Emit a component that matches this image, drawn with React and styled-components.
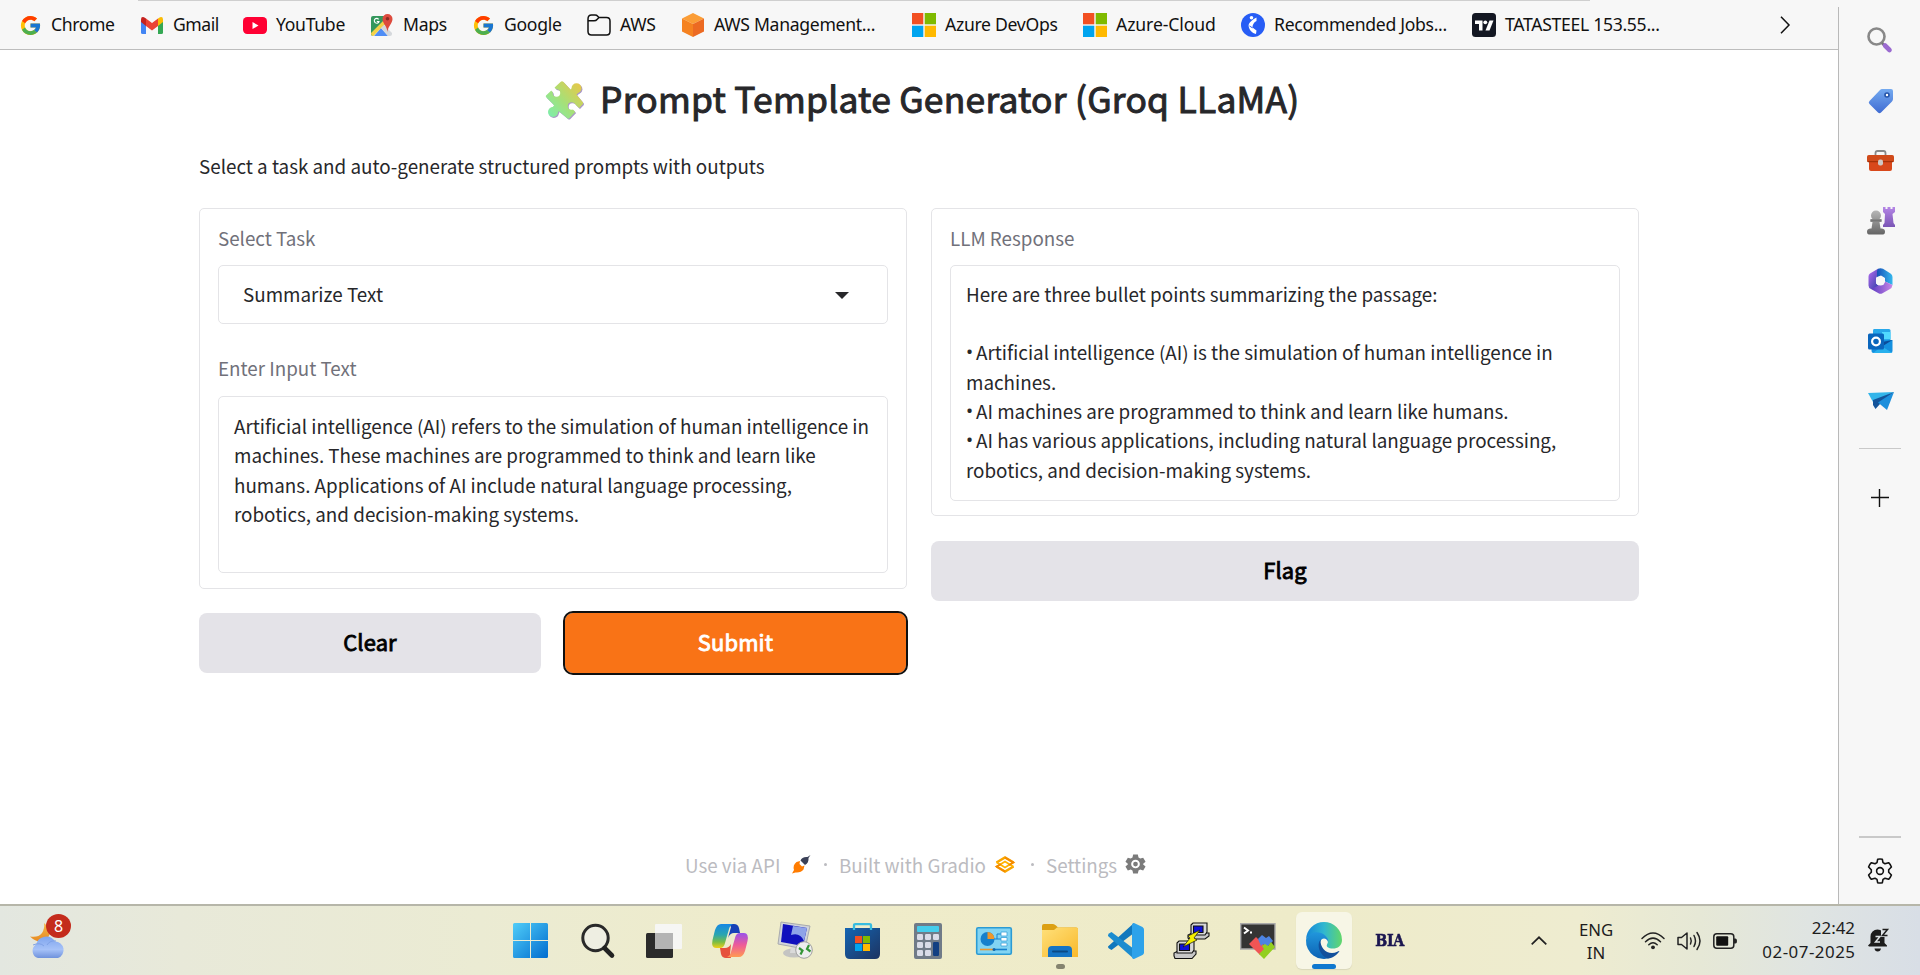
import React from "react";
import styled, { createGlobalStyle } from "styled-components";
import { FcGoogle } from "react-icons/fc";

const ui = `"Noto Sans", "Open Sans", sans-serif`;
const body = `"Noto Sans CJK SC", "Noto Sans", sans-serif`;

const GlobalStyle = createGlobalStyle`
  * { box-sizing: border-box; }
  body { margin: 0; background: #fff; overflow: hidden; }
  svg { display: block; flex: none; overflow: visible; }
  button { border: 0; padding: 0; margin: 0; }
`;

const Screen = styled.div`
  width: 1920px;
  height: 975px;
  display: flex;
  flex-direction: column;
  overflow: hidden;
`;

const Browser = styled.div`
  display: flex;
  height: 904px;
  background: #f7f7f7;
`;

const MainColumn = styled.div`
  width: 1838px;
  display: flex;
  flex-direction: column;
`;

const TopEdge = styled.div`
  height: 1px;
  width: 1452px;
  margin-left: 138px;
  background: #cfcfcf;
`;

const BookmarkBar = styled.nav`
  height: 49px;
  padding-left: 18px;
  display: flex;
  align-items: center;
  border-bottom: 1px solid #bdbdbd;
`;

const Bookmark = styled.a`
  width: ${(p) => p.$w}px;
  display: flex;
  align-items: center;
  gap: 9px;
  color: #111;
  font: 400 17.6px/24px ${ui};
  letter-spacing: ${(p) => p.$ls}px;
  white-space: nowrap;
`;

const BookmarkName = styled.span`
  padding-bottom: 2px;
`;

const IconBox = styled.span`
  width: 24px;
  height: 24px;
  display: flex;
  align-items: center;
  justify-content: center;
  flex: none;
`;

const Page = styled.main`
  flex: 1;
  display: flex;
  flex-direction: column;
  padding: 27px 199px 0;
  background: #fff;
  font-family: ${body};
`;

const Title = styled.h1`
  margin: 0;
  height: 46px;
  display: flex;
  align-items: center;
  gap: 16px;
  padding-left: 346px;
  color: #27272a;
  font-size: 35.4px;
  font-weight: 400;
  line-height: 46px;
  letter-spacing: 0.25px;
  -webkit-text-stroke: 1px #27272a;
  white-space: nowrap;
`;

const TitleText = styled.span`
  padding-bottom: 5px;
`;

const Intro = styled.p`
  margin: 28px 0 27px;
  color: #27272a;
  font-size: 18.82px;
  line-height: 30px;
`;

const Columns = styled.div`
  display: grid;
  grid-template-columns: 708px 708px;
  gap: 24px;
  align-items: start;
`;

const Column = styled.section`
  display: flex;
  flex-direction: column;
  gap: ${(p) => p.$gap}px;
`;

const Card = styled.div`
  height: ${(p) => p.$h}px;
  padding: 15px 18px 16px;
  border: 1px solid #e4e4e7;
  border-radius: 5px;
`;

const Label = styled.div`
  height: 28px;
  margin: ${(p) => p.$top || 0}px 0 ${(p) => p.$bottom || 13}px;
  color: #71717a;
  font-size: 18.8px;
  line-height: 28px;
`;

const Field = styled.div`
  height: ${(p) => p.$h}px;
  padding: ${(p) => p.$pt || 14}px 15px 0;
  border: 1px solid #e4e4e7;
  border-radius: 5px;
  color: #27272a;
  font-size: 18.82px;
  line-height: 29.4px;
  white-space: pre;
`;

const Line = styled.div`
  display: flex;
  height: 29.4px;
`;

const Bullet = styled.span`
  width: 10px;
  flex: none;
  font-family: ${ui};
`;

const Select = styled(Field)`
  padding: 0 38px 0 24px;
  display: flex;
  align-items: center;
  justify-content: space-between;
`;

const SelectValue = styled.span`
  padding-bottom: 1px;
`;

const Buttons = styled.div`
  display: grid;
  grid-template-columns: 342px 341px;
  gap: 24px;
`;

const Button = styled.button`
  height: 60px;
  padding-bottom: 2px;
  border-radius: 8px;
  background: ${(p) => (p.$primary ? "#f97316" : "#e4e3e8")};
  color: ${(p) => (p.$primary ? "#fff" : "#000")};
  outline: ${(p) => (p.$primary ? "2px solid #101010" : "none")};
  font-family: ${body};
  font-size: 21.9px;
  font-weight: 400;
  letter-spacing: 0.15px;
  line-height: 30px;
  -webkit-text-stroke: 0.85px currentColor;
`;

const Footer = styled.footer`
  margin: auto 0 25px;
  padding-left: 486px;
  height: 30px;
  display: flex;
  align-items: center;
  color: #bbbbc0;
  font-size: 18.8px;
`;

const FooterLink = styled.span`
  display: flex;
  align-items: center;
  gap: ${(p) => p.$gap || 9}px;
  width: ${(p) => p.$w}px;
  white-space: nowrap;
`;

const Dot = styled.span`
  width: 3px;
  height: 3px;
  border-radius: 50%;
  background: #bbbbc0;
  margin-right: 12px;
`;

const Sidebar = styled.aside`
  width: 82px;
  margin-top: 7px;
  padding: 4px 0 0;
  border-left: 1px solid #b9b9b9;
  display: flex;
  flex-direction: column;
  align-items: center;
`;

const SideItem = styled.div`
  height: 60px;
  width: 28px;
  margin-left: ${(p) => p.$ml ?? 2}px;
  display: flex;
  align-items: center;
  justify-content: center;
`;

const Rule = styled.div`
  width: 42px;
  height: ${(p) => p.$h}px;
  margin: ${(p) => p.$m};
  background: #c9c9c9;
`;

const Taskbar = styled.footer`
  height: 71px;
  border-top: 2px solid #b6b6a9;
  display: flex;
  align-items: center;
  background: linear-gradient(90deg, #e3e7e0 0, #e8e9d9 180px, #ebebd3 480px, #efecca 800px, #eeebc9 1300px, #eeecd0 1580px, #e6e8d6 1700px, #dfe4e2 1810px, #d8dee6 1920px);
  color: #1d1d1d;
  font-family: ${ui};
`;

const Weather = styled.div`
  width: 497px;
  height: 69px;
  padding: 17px 0 0 30px;
`;

const WeatherIcon = styled.div`
  position: relative;
  width: 36px;
  height: 36px;
`;

const Badge = styled.span`
  position: absolute;
  left: 16px;
  top: -9px;
  width: 25px;
  height: 24px;
  border-radius: 50%;
  background: #c42b1c;
  color: #fff;
  font: 400 16px/24px ${ui};
  text-align: center;
`;

const Apps = styled.div`
  display: flex;
  width: 1034px;
`;

const AppCell = styled.div`
  position: relative;
  flex: none;
  width: 66px;
  height: 57px;
  display: flex;
  align-items: center;
  justify-content: center;

  &:first-child {
    width: 68px;
    padding-right: 2px;
  }
`;

const Active = styled.div`
  width: 56px;
  height: 57px;
  border-radius: 6px;
  background: #f7f6e6;
  box-shadow: 0 1px 1px #d9d7bb;
  display: flex;
  align-items: center;
  justify-content: center;
`;

const Indicator = styled.i`
  position: absolute;
  bottom: 0;
  left: calc(50% - ${(p) => p.$w / 2}px);
  width: ${(p) => p.$w}px;
  height: 5px;
  border-radius: 3px;
  background: ${(p) => p.$c};
`;

const Bia = styled.span`
  color: #1b1650;
  font: 700 16.5px/20px "DejaVu Serif", serif;
  -webkit-text-stroke: 0.6px #1b1650;
  letter-spacing: -0.4px;
  transform: scaleX(0.86);
`;

const Tray = styled.div`
  flex: 1;
  display: flex;
  align-items: center;
`;

const Lang = styled.div`
  width: 34px;
  margin: 0 28px 0 32px;
  font-size: 16.8px;
  line-height: 23px;
  text-align: center;
`;

const Clock = styled.div`
  width: 100px;
  margin: 0 13px 0 18px;
  padding-bottom: 2px;
  display: flex;
  flex-direction: column;
  align-items: flex-end;
  font-size: 16.9px;
  line-height: 24px;
  white-space: nowrap;
`;

const DateText = styled.span`
  letter-spacing: 0.5px;
  margin-right: -0.5px;
`;

const TrayIcons = styled.div`
  display: flex;
  gap: 12px;
`;

const Gmail = () => (
  <svg width="22" height="17" viewBox="0 0 22 17">
    <path d="M0 2.2V15.5Q0 17 1.5 17H5V7Z" fill="#4285f4" />
    <path d="M22 2.2V15.5Q22 17 20.5 17H17V7Z" fill="#34a853" />
    <path d="M17 1.5 19 .3Q22-.6 22 2.5V5L17 9Z" fill="#fbbc04" />
    <path d="M5 1.5 3 .3Q0-.6 0 2.5V5L5 9Z" fill="#c5221f" />
    <path d="M5 1.5 11 6 17 1.5V9L11 13.4 5 9Z" fill="#ea4335" />
  </svg>
);

const YouTube = () => (
  <svg width="24" height="17" viewBox="0 0 24 17">
    <rect width="24" height="17" rx="4.2" fill="#ff0033" />
    <path d="M9.5 5v7l6-3.5Z" fill="#fff" />
  </svg>
);

const Maps = () => (
  <svg width="24" height="22" viewBox="0 0 24 22">
    <path d="M1 4Q1 2 3 2H16V9L2 22Q1 21 1 20Z" fill="#34975c" />
    <path d="M4 22 11 14 18 22Z" fill="#4f8df5" />
    <path d="M1 19 15 5 18 8 11 14 3.5 22Q1 22 1 19Z" fill="#f3d248" />
    <path d="M11 14 14 11 22 19V20Q22 22 20 22H18Z" fill="#d5d8dc" />
    <path d="M17.5 18C17 12 12.5 9.5 12.5 5A5 5 0 0 1 22.5 5C22.5 9.5 18 12 17.5 18Z" fill="#dd4b3e" />
    <circle cx="17.5" cy="4.8" r="1.8" fill="#8d2b23" />
    <path d="M8.6 5.3A2.4 2.4 0 1 0 9 7.5H6.8" fill="none" stroke="#fff" strokeWidth="1.1" />
  </svg>
);

const Folder = () => (
  <svg width="24" height="22" viewBox="0 0 24 22" fill="none" stroke="#111" strokeWidth="1.5">
    <path d="M1 5V17.5Q1 21 4.5 21H19.5Q23 21 23 17.5V7Q23 3.5 19.5 3.5H12L9.5 1.2Q9 1 8 1H4.5Q1 1 1 5ZM1 6.8H7Q9 6.8 10 5.5L12 3.5" />
  </svg>
);

const Cube = () => (
  <svg width="22" height="24" viewBox="0 0 22 24">
    <path d="M11 0 22 5.5 11 11 0 5.5Z" fill="#fb9d36" />
    <path d="M0 5.5 11 11V24L0 18.5Z" fill="#f58220" />
    <path d="M22 5.5 11 11V24L22 18.5Z" fill="#ec6a22" />
  </svg>
);

const Microsoft = ({ size = 24 }) => (
  <svg width={size} height={size} viewBox="0 0 24 24">
    <path fill="#f25022" d="M0 0h11.3v11.3H0z" />
    <path fill="#7fba00" d="M12.7 0H24v11.3H12.7z" />
    <path fill="#00a4ef" d="M0 12.7h11.3V24H0z" />
    <path fill="#ffb900" d="M12.7 12.7H24V24H12.7z" />
  </svg>
);

const Jobs = () => (
  <svg width="24" height="24" viewBox="0 0 24 24">
    <circle cx="12" cy="12" r="12" fill="#275df5" />
    <circle cx="10.5" cy="4.8" r="1.8" fill="#fff" />
    <path d="M15.5 4.500C12 6.500 8 9 7.500 12.500L11.500 15.500C11.500 12.500 12 10 15.500 8ZM7.500 12.500 9.500 13 15.500 17.500 15 21C11 20 8 17 7.500 12.500Z" fill="#fff" />
  </svg>
);

const TradingView = () => (
  <svg width="24" height="24" viewBox="0 0 24 24">
    <rect width="24" height="24" rx="3.5" fill="#131722" />
    <path d="M3 7.5H10.5V17.5H7V11H3Z" fill="#fff" />
    <circle cx="13.3" cy="9.3" r="1.9" fill="#fff" />
    <path d="M17.5 7.5H21.5L17.5 17.5H13.5Z" fill="#fff" />
  </svg>
);

const Puzzle = () => (
  <svg width="39" height="39" viewBox="0 0 39 39">
    <defs>
      <linearGradient id="pz" x1="0" y1="34" x2="34" y2="4" gradientUnits="userSpaceOnUse">
        <stop offset="0" stopColor="#79efb0" />
        <stop offset=".5" stopColor="#a6e078" />
        <stop offset="1" stopColor="#e3ca4c" />
      </linearGradient>
      <mask id="pm">
        <rect x="-2" y="-2" width="43" height="43" fill="#fff" />
        <circle cx="11.5" cy="12" r="3.7" fill="#000" />
        <path d="M5 8 8 5 13 10 9 13Z" fill="#000" />
        <circle cx="26.5" cy="25" r="3.7" fill="#000" />
        <path d="M25 25 29 22 35 28 31 32Z" fill="#000" />
      </mask>
    </defs>
    {[["#aa98c6", 0.9], ["url(#pz)", 0]].map(([fill, d]) => (
      <g key={fill} transform={`translate(${d} ${d})`} mask="url(#pm)" fill={fill}>
        <path d="M1 14.5 15.5 1Q17-.5 18.5 1L25 8 31 13 38 21.5Q38.5 23 37 24L24 37.5Q23 38 22 37L13 29.5 8 23 1 16Q.5 15 1 14.5Z" />
        <path d="M22 13 28 6 34 11 28 17ZM6 28 11 22 16 27 11 34Z" />
        <circle cx="31.5" cy="7.3" r="5" />
        <circle cx="8" cy="31" r="5" />
      </g>
    ))}
  </svg>
);

const Rocket = () => (
  <svg width="19" height="19" viewBox="0 0 19 19">
    <path d="M18.5 0 16.5 3Q17 8 13 10L8.5 5.5Q10 1.5 15.5 2Z" fill="#3b4158" />
    <path d="M8 6 4.5 7Q.5 10 2 15L0 18.5 3.5 17.5Q9 18 11.5 14.5L12.5 10.5 10 11.5 7.5 9Z" fill="#ff7c00" />
  </svg>
);

const Gradio = () => (
  <svg width="20" height="17" viewBox="0 0 20 17" fill="none">
    <path d="M1.5 6.5 10 1.5 18.5 6.5M18.5 10.5 10 15.5 1.5 10.5" stroke="#f9a600" strokeWidth="2.6" />
    <path d="M1.5 6.3 10 11.5 18.5 6.3M1.5 10.7 10 5.5 18.5 10.7" stroke="#ffb300" strokeWidth="1.9" />
    <path d="M10 1.5 18.5 6.5 14 9M10 15.5 1.5 10.5 6 8" stroke="#f48a00" strokeWidth="1.8" />
  </svg>
);

const SolidGear = () => (
  <svg width="19" height="20" viewBox="0 0 24 24" fill="#7b7b7b">
    <path fillRule="evenodd" d="M9 0h6l.8 3.8 2.2 1.3L21.700 4l3 5.200-3 2.600v.8l3 2.500-3 5.200L18 19l-2.200 1.300L15 24H9l-.8-3.700L6 19l-3.700 1.300-3-5.200 3-2.500v-.8l-3-2.600L2.300 4 6 5.100l2.200-1.300ZM12 6.500a5.500 5.500 0 1 0 0 11 5.500 5.500 0 0 0 0-11Zm0 2.500a3 3 0 1 1 0 6 3 3 0 0 1 0-6Z" />
  </svg>
);

const SideSearch = () => (
  <svg width="26" height="26" viewBox="0 0 26 26" fill="none">
    <circle cx="9.5" cy="8.5" r="8" stroke="#888" strokeWidth="2.6" />
    <path d="m15 15 3 3" stroke="#777" strokeWidth="2.6" />
    <path d="m18 17.500 4.500 4.500" stroke="#9b6bd0" strokeWidth="4.6" strokeLinecap="round" />
  </svg>
);
const Tag = () => (
  <svg width="26" height="26" viewBox="0 0 26 26">
    <defs><linearGradient id="tg" x2="0" y2="1"><stop stopColor="#74aaf0" /><stop offset="1" stopColor="#3f6bd2" /></linearGradient></defs>
    <path d="M14 1H23Q25 1 25 3V11Q25 12 24 13.5L13 24.5Q11.5 26 10 24.5L1.5 16Q0 14.5 1.5 13L12 2Q13 1 14 1Z" fill="url(#tg)" />
    <circle cx="19" cy="7" r="2" fill="#fff" stroke="#2554a8" strokeWidth="1.6" />
  </svg>
);
const Briefcase = () => (
  <svg width="27" height="22" viewBox="0 0 27 22">
    <path d="M8.5 6V3Q8.5 1 10.5 1H16.5Q18.5 1 18.5 3V6" fill="none" stroke="#888" strokeWidth="1.8" />
    <path d="M2 11H25V19Q25 21 23 21H4Q2 21 2 19Z" fill="#d8481b" />
    <rect y="5" width="27" height="7" rx="1.8" fill="#d04a1a" />
    <path d="M0 11H27L26 12.2H1Z" fill="#a53109" />
    <rect x="11" y="9.5" width="5" height="6" rx="2" fill="#cfc9c5" />
  </svg>
);
const Chess = () => (
  <svg width="28" height="28" viewBox="0 0 28 28">
    <defs>
      <linearGradient id="cg" x2="0" y2="1"><stop stopColor="#b6b6b6" /><stop offset="1" stopColor="#656565" /></linearGradient>
      <linearGradient id="cp" x2="0" y2="1"><stop stopColor="#b586e6" /><stop offset="1" stopColor="#7a55b5" /></linearGradient>
    </defs>
    <path d="M16 0H18.5V2H20.5V0H23.5V2H25.5V0H28V5L25.5 7 26.5 16 28 18V20H16V18L17.5 16 18 7 16 5Z" fill="url(#cp)" />
    <path d="M5.5 12A5 5 0 1 1 12.5 12H14.5V15H12.5L13.5 21.5H15Q18 22 18 24.5 18 27.5 16 27.5H2Q0 27.5 0 24.5 0 22 3 21.5H4.500L5.500 15H3.500V12Z" fill="url(#cg)" />
    <path d="M3.5 12.5H14.5V14.5H3.5Z" fill="#777" />
  </svg>
);
const M365 = () => (
  <svg width="25" height="26" viewBox="0 0 25 26">
    <defs>
      <linearGradient id="ma" x2="1" y2="1"><stop stopColor="#b66cf0" /><stop offset="1" stopColor="#2f3ea8" /></linearGradient>
      <linearGradient id="mb"><stop stopColor="#1650b8" /><stop offset="1" stopColor="#35b8ee" /></linearGradient>
      <linearGradient id="mc"><stop stopColor="#5a3ac2" /><stop offset="1" stopColor="#c987e6" /></linearGradient>
    </defs>
    <path d="M10 .8 2 5.5Q.5 6.5.5 8.5V17.5Q.5 20 3 21H6L11 18 8 15.5V10L10 7Z" fill="url(#ma)" />
    <path d="M10 .8Q12.5-.5 15 .8L22.5 5.5Q24.5 6.5 24.5 9V17L17 13.5V10L13 7.5 9 9V3Z" fill="url(#mb)" />
    <path d="M3 21 15.5 15 17 13.5 24.5 17Q24 20 22 21L14.5 25.3Q12.5 26.3 10.5 25.3Z" fill="url(#mc)" />
    <circle cx="12.5" cy="13" r="4.6" fill="#f7f7f7" />
  </svg>
);
const Outlook = () => (
  <svg width="25" height="24" viewBox="0 0 25 24">
    <path d="M6 0H21Q22.5 0 22.5 1.5V14H5V1.5Q5 0 6 0Z" fill="#28a8ea" />
    <path d="M14 3H22.5V10H14Z" fill="#50d9ff" />
    <path d="M4 11 24.5 11V22Q24.5 24 22.5 24H5.5Q3.5 24 3.5 22Z" fill="#1490df" />
    <path d="M24.5 11 14 17.5V13L24.5 11Z" fill="#0a4c9b" />
    <path d="M24.5 24 14 17.5 5 24Z" fill="#28b0ed" />
    <rect y="4.5" width="16" height="16" rx="1.5" fill="#0a66bd" />
    <circle cx="8" cy="12.5" r="3.9" fill="none" stroke="#fff" strokeWidth="2.2" />
  </svg>
);
const Plane = () => (
  <svg width="26" height="18" viewBox="0 0 26 18">
    <path d="M0 1 26 0 5 10Z" fill="#33b5ea" />
    <path d="M26 0 5 8V13L7.5 17 12 12Z" fill="#14549a" />
    <path d="M26 0 10 10.5 19 18Z" fill="#1c8fdc" />
  </svg>
);
const Plus = () => (
  <svg width="18" height="18" viewBox="0 0 18 18"><path d="M0 8.500H18M8.500 0V18" stroke="#111" strokeWidth="1.4" /></svg>
);
const GearOutline = () => (
  <svg width="26" height="26" viewBox="0 0 26 26" fill="none" stroke="#111" strokeWidth="1.6" strokeLinejoin="round">
    <path d="M10.7 1.2Q13 .8 15.3 1.2L16 4.6 18 5.8 21.6 4.7Q23.5 6.5 24.4 9L21.7 11.7V14.3L24.4 17Q23.5 19.5 21.6 21.3L18 20.2 16 21.4 15.3 24.8Q13 25.2 10.7 24.8L10 21.4 8 20.2 4.4 21.3Q2.5 19.5 1.6 17L4.3 14.3V11.7L1.6 9Q2.5 6.5 4.4 4.7L8 5.8 10 4.6Z" />
    <circle cx="13" cy="13" r="3.4" />
  </svg>
);

const Cloud = () => (
  <svg width="36" height="36" viewBox="0 0 36 36">
    <defs>
      <linearGradient id="cl" x2="0" y2="1"><stop stopColor="#7fa5ee" /><stop offset=".6" stopColor="#a6c2f8" /><stop offset="1" stopColor="#6f92dc" /></linearGradient>
      <linearGradient id="mo" x2="0" y2="1"><stop stopColor="#f6b747" /><stop offset="1" stopColor="#e68a22" /></linearGradient>
    </defs>
    <path d="M14 0Q23 7 18 15 10 23 0 13.5 8 15 12 10 15 5 14 0Z" fill="url(#mo)" />
    <path d="M8 35A7.5 7.5 0 0 1 6 21.5 10.5 10.5 0 0 1 25 18.5 8.5 8.5 0 0 1 28 35Z" fill="url(#cl)" />
    <path d="M3 22Q10 19 14 23M17 22Q20 17 26 18" fill="none" stroke="#7fa1e6" strokeWidth="1" />
  </svg>
);

const Windows = () => (
  <svg width="35" height="35" viewBox="0 0 35 35">
    <defs><linearGradient id="wn" x2="35" y2="35" gradientUnits="userSpaceOnUse"><stop stopColor="#50cdf8" /><stop offset="1" stopColor="#006ccf" /></linearGradient></defs>
    <path d="M1.5 0H17V17H0V1.5Q0 0 1.5 0ZM18 0H33.5Q35 0 35 1.5V17H18ZM0 18H17V35H1.5Q0 35 0 33.5ZM18 18H35V33.5Q35 35 33.5 35H18Z" fill="url(#wn)" />
  </svg>
);
const TaskSearch = () => (
  <svg width="34" height="36" viewBox="0 0 34 36" fill="none">
    <circle cx="14.5" cy="15" r="12.7" stroke="#292929" strokeWidth="3" fill="#eeeee2" />
    <path d="m23.5 25 7.5 7.5" stroke="#222" strokeWidth="4.6" strokeLinecap="round" />
  </svg>
);
const TaskView = () => (
  <svg width="36" height="34" viewBox="0 0 36 34">
    <rect y="9" width="27" height="25" rx="1.5" fill="#2b2b2b" />
    <rect x="9" width="27" height="25" rx="1" fill="#f6f6f4" />
    <path d="M9 9H27V25H9Z" fill="#b4b4b4" />
  </svg>
);
const Copilot = () => (
  <svg width="36" height="34" viewBox="0 0 36 34">
    <defs>
      <linearGradient id="ca" x2="0" y2="1"><stop stopColor="#1687e5" /><stop offset=".45" stopColor="#2aa6b0" /><stop offset=".75" stopColor="#79bd45" /><stop offset="1" stopColor="#f2cf16" /></linearGradient>
      <linearGradient id="cb" x2="0" y2="1"><stop stopColor="#9a52ea" /><stop offset=".5" stopColor="#ee5b98" /><stop offset="1" stopColor="#ff9b52" /></linearGradient>
    </defs>
    <path d="M17 0H22Q26 0 27 4L28 9H22Q18 9 16 14L19 3Z" fill="#1741b7" />
    <path d="M9 0H21Q18 1 17 5L13 19Q12 24 8 24H4Q-1 24 .5 16L3 6Q5 0 9 0Z" fill="url(#ca)" />
    <path d="M19 34H14Q10 34 9 30L8 24H13Q17 24 19 20L18 30Z" fill="#e6513d" />
    <path d="M27 33H15Q18 32 19 28L23 14Q24 9 28 9H32Q37 9 35.5 17L33 27Q31 33 27 33Z" fill="url(#cb)" />
  </svg>
);
const Remote = () => (
  <svg width="36" height="37" viewBox="0 0 36 37">
    <ellipse cx="16" cy="31" rx="11" ry="4.5" fill="#c4c4c2" />
    <path d="M13 24H20V31H12Z" fill="#dadada" />
    <path d="M3 0 32 4 27 27 0 22Z" fill="#d1d4da" stroke="#a8aaae" />
    <path d="M5 2 29 6 25 24 3 20Z" fill="#1010bd" />
    <path d="M15 4 29 6 26 19Q22 10 13 13Z" fill="#8fa3e8" />
    <circle cx="26" cy="28" r="8.3" fill="#ededed" stroke="#a0a0a0" />
    <path d="m21 26 3.500 2.500-2 4M31 23l-2 4 3.500 2.500" fill="none" stroke="#359538" strokeWidth="2.2" />
  </svg>
);
const Store = () => (
  <svg width="35" height="36" viewBox="0 0 35 36">
    <defs><linearGradient id="st" x2="1" y2="1"><stop stopColor="#1465b3" /><stop offset="1" stopColor="#1d3461" /></linearGradient></defs>
    <path d="M0 5H35V31Q35 36 30 36H5Q0 36 0 31Z" fill="url(#st)" />
    <path d="M9 7V2.5Q9 1.2 10.5 1.2H24.5Q26 1.2 26 2.5V7" fill="none" stroke="#37bce0" strokeWidth="2.3" />
    <g transform="translate(10 13)"><Microsoft size={15} /></g>
  </svg>
);
const Calculator = () => (
  <svg width="28" height="36" viewBox="0 0 28 36">
    <rect width="28" height="36" rx="2" fill="#707b88" />
    <rect x="3" y="3" width="22" height="6" rx="1" fill="#45cdec" />
    {[11, 19, 27].map((y) => [3, 11, 19].map((x) => (
      <rect key={`${x}-${y}`} x={x} y={y} width="6" height="6" rx="1.2" fill={x === 19 && y > 11 ? "#707b88" : "#d9dce8"} />
    )))}
    <rect x="19" y="19" width="6" height="14" rx="1.2" fill="#123f82" />
  </svg>
);
const ControlPanel = () => (
  <svg width="36" height="28" viewBox="0 0 36 28">
    <rect x=".7" y=".7" width="34.6" height="26.6" rx="1.5" fill="#82d4f3" stroke="#2b9bd4" strokeWidth="1.6" />
    <circle cx="11.5" cy="12" r="7" fill="#1780cc" />
    <path d="M11.5 12V5A7 7 0 0 1 18.5 12Z" fill="#ee972c" />
    <path d="M18 12H21V7H25M21 12H25" stroke="#1780cc" fill="none" />
    <path d="M25 5H31V9H25ZM25 10.5H31V14H25ZM25 16H31V19H25Z" fill="#fff" stroke="#3aa1d8" strokeWidth=".8" />
    <path d="M4 22.5H17" stroke="#ee972c" strokeWidth="1.6" /><path d="M18 22.5H31" stroke="#1780cc" strokeWidth="1.6" />
    <circle cx="18" cy="22.5" r="1.5" fill="#1268a8" />
  </svg>
);
const Explorer = () => (
  <svg width="36" height="33" viewBox="0 0 36 33">
    <defs><linearGradient id="ex" x2="1" y2="1"><stop stopColor="#ffe07a" /><stop offset="1" stopColor="#f9b92b" /></linearGradient></defs>
    <path d="M0 2Q0 0 2 0H11Q12.5 0 14 1.5L16 3.5H34Q36 3.5 36 5V12H0Z" fill="#dca013" />
    <path d="M0 6H12L15 3.5H34.5Q36 3.5 36 5V33H0Z" fill="url(#ex)" />
    <path d="M6 33V26Q6 22 10 22H26Q30 22 30 26V33Z" fill="#1674c4" />
    <rect x="10" y="26.5" width="16" height="2" rx="1" fill="#0b4a86" />
  </svg>
);
const VsCode = () => (
  <svg width="36" height="36" viewBox="0 0 36 36">
    <path d="M26 0 0 23.5Q0 25 1 25.5L3.5 27 26 10Z" fill="#1178bd" />
    <path d="M3.5 9 26 26V36L0 13Q-.3 11.5 1 10.5Z" fill="#1c8ccf" />
    <path d="M26 0 34.5 4Q36 5 36 6.5V29.5Q36 31 34.5 32L26 36Q24 36 24 34V2Q24 0 26 0Z" fill="#2da2ea" />
  </svg>
);
const Putty = () => (
  <svg width="36" height="36" viewBox="0 0 36 36" stroke="#111" strokeWidth="1.1">
    <path d="M14 15V12L18 10H35V13L31 16H15Z" fill="#c8c8c8" />
    <path d="M17 2 19 0H33V9L31 12H17Z" fill="#d8d8d8" />
    <path d="M19.5 3H29V9.5H19.5Z" fill="#1010d8" />
    <path d="M0 33V30L4 28H22V31L18 35.5H1Z" fill="#c8c8c8" />
    <path d="M3 20 5 18H20V27L18 30H3Z" fill="#d8d8d8" />
    <path d="M5.5 21H15.5V27.5H5.5Z" fill="#1010d8" />
    <path d="M26 7 14 13 16 15 9 24 23 17 20 15Z" fill="#f5f000" strokeWidth=".7" />
  </svg>
);
const Moba = () => (
  <svg width="36" height="36" viewBox="0 0 36 36">
    <path d="M.7.7H35V26H.7Z" fill="#343434" stroke="#aaa" strokeWidth="1.4" />
    <path d="m4 4.5 4 3-4 3" fill="none" stroke="#fff" strokeWidth="2" /><path d="M10 9.5h2" stroke="#fff" strokeWidth="2" />
    <path d="m9 21 7-7 11 11-7 7Z" fill="#ef5555" />
    <path d="m18 16 4-4 4 3 3-2 4 5-7 7-3-4-2 2Z" fill="#4d83e2" />
    <path d="m19 31 5-5-2-3 3-2 3 2 3-4 4 5-11 12Z" fill="#93cf1f" />
  </svg>
);
const Edge = () => (
  <svg width="36" height="36" viewBox="0 0 36 36">
    <defs>
      <linearGradient id="ea" x1="0" y1=".5" x2="1" y2=".5"><stop stopColor="#1686d8" /><stop offset=".5" stopColor="#30b7d0" /><stop offset="1" stopColor="#62d76a" /></linearGradient>
      <linearGradient id="eb" x2="0" y2="1"><stop stopColor="#2196dc" /><stop offset="1" stopColor="#0c62b4" /></linearGradient>
    </defs>
    <path d="M0 17A18 18 0 0 1 36 17C36 23 31.5 25.5 27 25.5 22 25.5 20 23.5 21 21.5 24 17 20 12.5 15 11.5 8 9.5 2 12 0 17Z" fill="url(#ea)" />
    <path d="M0 17C2 10 9 8 15 10 20 12 23 16 22 19 21 14.5 15 13.5 14 20 13.5 27 18 34 25 34.5A18 18 0 0 1 0 17Z" fill="url(#eb)" />
    <path d="M14.5 16.5C10 22 14 33 22 35.5 27 35 31 32 33.5 28 32 28 30 30 26 30 19 30 14 24 14.5 16.5Z" fill="#12509c" />
  </svg>
);

const ChevronUp = () => (
  <svg width="16" height="9" viewBox="0 0 16 9" fill="none"><path d="m.7 8.3 7.3-7 7.3 7" stroke="#222" strokeWidth="1.7" /></svg>
);
const Wifi = () => (
  <svg width="24" height="20" viewBox="0 0 24 20" fill="none" stroke="#222" strokeWidth="1.5" strokeLinecap="round">
    <path d="M1 7.500Q12-3.500 23 7.500M4.500 10.800Q12 3.500 19.500 10.800M7.800 13.800Q12 9.800 16.200 13.800" />
    <circle cx="12" cy="16.3" r="1.9" fill="#222" stroke="none" />
  </svg>
);
const Speaker = () => (
  <svg width="24" height="20" viewBox="0 0 24 20" fill="none" stroke="#222" strokeWidth="1.5" strokeLinecap="round" strokeLinejoin="round">
    <path d="M1 6.5H4.5L10 2V18L4.500 13.5H1Z" /><path d="M13.5 7Q15 10 13.5 13M17 4.5Q20 10 17 15.5M20 1.500Q26 10 20 18.5" />
  </svg>
);
const Battery = () => (
  <svg width="24" height="20" viewBox="0 0 24 20">
    <rect x=".8" y="2.8" width="20" height="14.4" rx="3" fill="none" stroke="#222" strokeWidth="1.5" />
    <rect x="3.2" y="5.2" width="12" height="9.6" rx="1" fill="#111" /><path d="M21 7.5h1.5q1.5 0 1.5 2.5t-1.5 2.5H21Z" fill="#222" />
  </svg>
);
const Bell = () => (
  <svg width="21" height="25" viewBox="0 0 21 25">
    <path d="M1 18.5H19V17.5L16.5 15V8.5A7 7 0 0 0 2.5 8.5V15L0 17.5Z" fill="#1c1c1c" />
    <path d="M6.5 20.5H13Q12.5 23.5 9.7 23.5T6.5 20.5Z" fill="#1c1c1c" />
    <path d="M13 0H22V9H13Z" fill="#dce1e3" />
    <path d="M7.5 8.5H12L7.5 14H12" fill="none" stroke="#dce1e3" strokeWidth="1.5" />
    <path d="M14.5 1.5H19.5L14.5 7.5H19.5" fill="none" stroke="#1c1c1c" strokeWidth="1.5" />
  </svg>
);

const bookmarks = [
  ["Chrome", 122, <FcGoogle size={23} />, -0.4],
  ["Gmail", 103, <Gmail />, -0.5],
  ["YouTube", 127, <YouTube />],
  ["Maps", 101, <Maps />],
  ["Google", 116, <FcGoogle size={23} />],
  ["AWS", 94, <Folder />],
  ["AWS Management...", 231, <Cube />],
  ["Azure DevOps", 171, <Microsoft />],
  ["Azure-Cloud", 158, <Microsoft />, -0.1],
  ["Recommended Jobs...", 231, <Jobs />],
  ["TATASTEEL 153.55...", 308, <TradingView />],
];

const inputText = `Artificial intelligence (AI) refers to the simulation of human intelligence in
machines. These machines are programmed to think and learn like
humans. Applications of AI include natural language processing,
robotics, and decision-making systems.`;

const response = [
  { text: "Here are three bullet points summarizing the passage:" },
  { text: "" },
  { bullet: true, text: "Artificial intelligence (AI) is the simulation of human intelligence in" },
  { text: "machines." },
  { bullet: true, text: "AI machines are programmed to think and learn like humans." },
  { bullet: true, text: "AI has various applications, including natural language processing," },
  { text: "robotics, and decision-making systems." },
];

const sideIcons = [SideSearch, Tag, Briefcase, Chess, M365, Outlook, Plane];
const apps = [Windows, TaskSearch, TaskView, Copilot, Remote, Store, Calculator, ControlPanel];

export default function App() {
  return (
    <Screen>
      <GlobalStyle />
      <Browser>
        <MainColumn>
          <TopEdge />
          <BookmarkBar>
            {bookmarks.map(([name, w, icon, ls = -0.3]) => (
              <Bookmark key={name} $w={w} $ls={ls}>
                <IconBox>{icon}</IconBox>
                <BookmarkName>{name}</BookmarkName>
              </Bookmark>
            ))}
            <svg width="10" height="18" viewBox="0 0 10 18" fill="none"><path d="m1 .7 8 8.3-8 8.3" stroke="#111" strokeWidth="1.5" /></svg>
          </BookmarkBar>
          <Page>
            <Title><Puzzle /><TitleText>Prompt Template Generator (Groq LLaMA)</TitleText></Title>
            <Intro>Select a task and auto-generate structured prompts with outputs</Intro>
            <Columns>
              <Column $gap={24}>
                <Card $h={381}>
                  <Label>Select Task</Label>
                  <Select $h={59}>
                    <SelectValue>Summarize Text</SelectValue>
                    <svg width="14" height="9" viewBox="0 0 14 9"><path d="M0 2H14L7 9Z" fill="#27272a" /></svg>
                  </Select>
                  <Label $top={30} $bottom={14}>Enter Input Text</Label>
                  <Field $h={177}>{inputText}</Field>
                </Card>
                <Buttons>
                  <Button>Clear</Button>
                  <Button $primary>Submit</Button>
                </Buttons>
              </Column>
              <Column $gap={25}>
                <Card $h={308}>
                  <Label>LLM Response</Label>
                  <Field $h={236} $pt={12.5}>
                    {response.map(({ bullet, text }, i) => (
                      <Line key={i}>
                        {bullet && <Bullet>•</Bullet>}
                        <span>{text}</span>
                      </Line>
                    ))}
                  </Field>
                </Card>
                <Button>Flag</Button>
              </Column>
            </Columns>
            <Footer>
              <FooterLink $w={139} $gap={12}>Use via API <Rocket /></FooterLink>
              <Dot />
              <FooterLink $w={192}>Built with Gradio <Gradio /></FooterLink>
              <Dot />
              <FooterLink $w={100}>Settings <SolidGear /></FooterLink>
            </Footer>
          </Page>
        </MainColumn>
        <Sidebar>
          {sideIcons.map((Icon, i) => (
            <SideItem key={i} $ml={i === 0 ? 0 : 2}><Icon /></SideItem>
          ))}
          <Rule $h={1} $m="17px 0 19px" />
          <SideItem $ml={0}><Plus /></SideItem>
          <Rule $h={2} $m="auto 0 3px" />
          <SideItem $ml={0}><GearOutline /></SideItem>
          <Rule $h={0} $m="0 0 3px" />
        </Sidebar>
      </Browser>
      <Taskbar>
        <Weather><WeatherIcon><Cloud /><Badge>8</Badge></WeatherIcon></Weather>
        <Apps>
          {apps.map((Icon, i) => (
            <AppCell key={i}><Icon /></AppCell>
          ))}
          <AppCell><Explorer /><Indicator $w={9} $c="#85836f" /></AppCell>
          <AppCell><VsCode /></AppCell>
          <AppCell><Putty /></AppCell>
          <AppCell><Moba /></AppCell>
          <AppCell><Active><Edge /></Active><Indicator $w={24} $c="#0f78cf" /></AppCell>
          <AppCell><Bia>BIA</Bia></AppCell>
        </Apps>
        <Tray>
          <ChevronUp />
          <Lang>ENG<br />IN</Lang>
          <TrayIcons><Wifi /><Speaker /><Battery /></TrayIcons>
          <Clock><span>22:42</span><DateText>02-07-2025</DateText></Clock>
          <Bell />
        </Tray>
      </Taskbar>
    </Screen>
  );
}
